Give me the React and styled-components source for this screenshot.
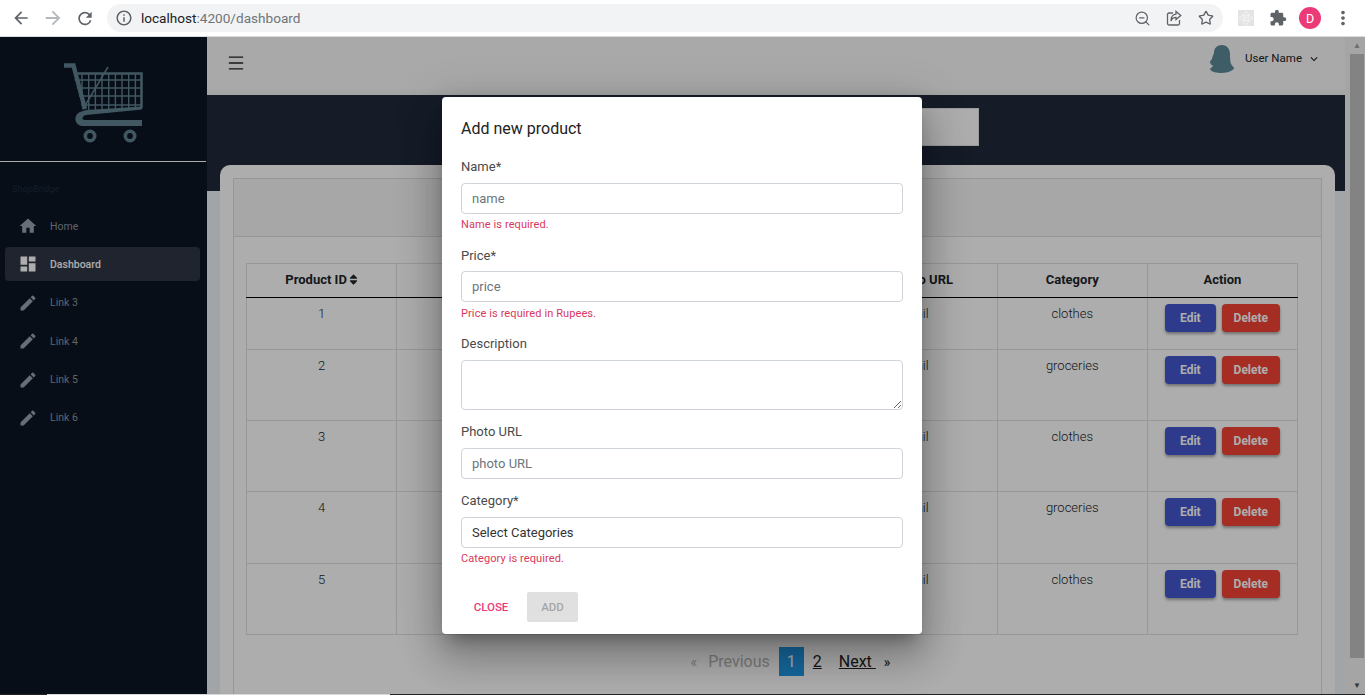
import React from "react";
import styled, { createGlobalStyle } from "styled-components";
import {
  MdArrowBack,
  MdArrowForward,
  MdRefresh,
  MdInfoOutline,
  MdExtension,
  MdMoreVert,
  MdHome,
  MdDashboard,
  MdEdit,
  MdKeyboardArrowDown,
} from "react-icons/md";
import { FaSort } from "react-icons/fa";
import { Menu, Star, ZoomOut } from "lucide-react";

const GlobalStyle = createGlobalStyle`
  html, body {
    margin: 0;
    height: 100%;
    overflow: hidden;
    font-family: Roboto, "Liberation Sans", sans-serif;
  }
  * {
    box-sizing: border-box;
  }
`;

const BrowserBar = styled.div`
  height: 37px;
  display: flex;
  align-items: center;
  padding: 0 0 0 11px;
  background: #fff;
  border-bottom: 1px solid #dadce0;
`;
const ChromeIcon = styled.span`
  width: ${(p) => p.$w || 32}px;
  display: flex;
  justify-content: center;
  color: ${(p) => p.$color || "#5f6368"};
  font-size: ${(p) => p.$size || 20}px;
`;
const UrlPill = styled.div`
  width: 1118px;
  height: 28px;
  margin: 0 7px 0 12px;
  padding: 0 1px 0 5px;
  display: flex;
  align-items: center;
  border-radius: 14px;
  background: #f1f3f4;
`;
const UrlText = styled.span`
  flex: 1;
  margin-left: 5px;
  font-size: 13.6px;
  color: #70757a;
`;
const UrlHost = styled.span`
  color: #202124;
`;
const ExtensionTile = styled.span`
  width: 16px;
  height: 16px;
  display: flex;
  margin: 0 8px;
`;
const ProfileBadge = styled.span`
  width: 22px;
  height: 22px;
  margin-left: 5px;
  border-radius: 50%;
  display: flex;
  align-items: center;
  justify-content: center;
  background: #ec3a78;
  color: #fff;
  font-size: 12.5px;
`;

const Viewport = styled.div`
  position: relative;
  height: 657px;
  display: flex;
  overflow: hidden;
  background: #eff4f8;
`;
const BottomEdge = styled.div`
  height: 1px;
  display: flex;
  background: #222;
`;
const EdgeLight = styled.span`
  width: 343px;
  margin-left: 47px;
  background: #d8d8d8;
`;

const Sidebar = styled.aside`
  width: 207px;
  flex: none;
  background: #0c1624;
`;
const LogoArea = styled.div`
  height: 125px;
  display: flex;
  justify-content: center;
  padding: 26px 0 0 1px;
  margin-right: 1px;
  border-bottom: 1px solid #ffffff;
`;
const BrandText = styled.div`
  margin: 21px 0 0 12px;
  height: 12px;
  font-size: 9.5px;
  line-height: 12px;
  font-style: italic;
  color: #1d2a3e;
`;
const NavList = styled.nav`
  margin-top: 14px;
  padding: 0 7px 0 5px;
  display: flex;
  flex-direction: column;
  gap: 4.4px;
`;
const NavItem = styled.a`
  height: 34px;
  padding-left: 13px;
  display: flex;
  align-items: center;
  gap: 12px;
  border-radius: 4px;
  font-size: 10.5px;
  font-weight: ${(p) => (p.$active ? 500 : 400)};
  color: ${(p) => (p.$active ? "#ffffff" : "#8c93a0")};
  background: ${(p) => (p.$active ? "#303645" : "transparent")};
  svg {
    flex: none;
    font-size: 20px;
    color: ${(p) => (p.$active ? "#ffffff" : "#9aa2ae")};
  }
`;

const Main = styled.main`
  flex: 1;
  min-width: 0;
  display: flex;
  flex-direction: column;
`;
const TopBar = styled.header`
  height: 58px;
  flex: none;
  padding: 0 24px 6px 19px;
  display: flex;
  align-items: center;
  justify-content: space-between;
  background: linear-gradient(#f9f9f9 88%, #f0f0f0);
  color: #222;
`;
const UserMenu = styled.div`
  display: flex;
  align-items: center;
  margin-bottom: 8px;
  font-size: 11.5px;
`;
const UserName = styled.span`
  margin: 0 5px 2px 10px;
`;
const Hero = styled.div`
  height: 96px;
  flex: none;
  padding-top: 13px;
  display: flex;
  justify-content: center;
  background: #1f2a3b;
`;
const SearchBox = styled.div`
  width: 406px;
  height: 38px;
  background: #ffffff;
  border: 1px solid #e4e4e4;
`;
const Card = styled.section`
  flex: 1;
  margin: -26px 10px 0 13px;
  padding: 13px;
  background: #ffffff;
  border-radius: 10px 10px 0 0;
`;
const InnerCard = styled.div`
  height: 600px;
  border: 1px solid #dfdfdf;
`;
const CardHeader = styled.div`
  height: 58px;
  background: #f7f7f7;
  border-bottom: 1px solid #dfdfdf;
`;
const CardBody = styled.div`
  padding: 26px 12px 0 12px;
`;
const Table = styled.table`
  width: 1052px;
  table-layout: fixed;
  border-collapse: collapse;
  font-size: 13px;
  color: #212529;
  text-align: center;
`;
const HeadCell = styled.th`
  height: 34px;
  padding: 0 0 3px;
  font-weight: 700;
  font-size: 13px;
  border: 1px solid #dee2e6;
  border-bottom: 1px solid #000;
  svg {
    margin: 0 -2.5px 0 0.5px;
    font-size: 13px;
    vertical-align: -2px;
  }
`;
const Row = styled.tr`
  height: ${(p) => p.$height}px;
`;
const Cell = styled.td`
  padding: 5px 8px 0;
  vertical-align: top;
  line-height: 21px;
  font-weight: 300;
  border: 1px solid #dee2e6;
`;
const ActionCell = styled(Cell)`
  padding: 6px 0 0;
  text-align: left;
`;
const ActionGroup = styled.div`
  display: flex;
  gap: 6px;
  padding-left: 17px;
`;
const ActionButton = styled.button`
  width: ${(p) => p.$w}px;
  height: 28px;
  padding: 0;
  border: none;
  border-radius: 4px;
  font-family: inherit;
  font-size: 12px;
  font-weight: 700;
  color: #ffffff;
  background: ${(p) => p.$bg};
  box-shadow: 0 2px 3px rgba(0, 0, 0, 0.35);
`;
const Pager = styled.div`
  height: 29px;
  margin-top: 12px;
  padding-left: 26px;
  display: flex;
  align-items: center;
  justify-content: center;
  font-size: 16px;
`;
const PagerText = styled.span`
  color: ${(p) => (p.$muted ? "#b4b4b4" : "#222")};
  font-size: ${(p) => p.$size || 16}px;
  margin: ${(p) => p.$margin || "0"};
`;
const PagerLink = styled.a`
  color: #222;
  text-decoration: underline;
  white-space: pre;
  margin: ${(p) => p.$margin || "0"};
`;
const PagerCurrent = styled.span`
  width: 25px;
  height: 29px;
  display: flex;
  align-items: center;
  justify-content: center;
  margin: 0 9px;
  color: #fff;
  background: #2199e8;
`;

const ScrollTrack = styled.div`
  width: 20px;
  flex: none;
  padding: 0 1px 0 5px;
  display: flex;
  flex-direction: column;
  align-items: center;
  background: #f4f4f4;
`;
const ScrollArrow = styled.span`
  height: 17px;
  flex: none;
  margin-top: ${(p) => (p.$bottom ? "auto" : "0")};
  display: flex;
  align-items: center;
  justify-content: center;
  font-size: 8px;
  color: ${(p) => (p.$bottom ? "#505050" : "#a0a0a0")};
`;
const ScrollThumb = styled.span`
  width: 14px;
  height: 604px;
  flex: none;
  background: #c1c1c1;
`;

const Backdrop = styled.div`
  position: absolute;
  inset: 0;
  display: flex;
  justify-content: center;
  align-items: flex-start;
  padding: 60px 1px 0 0;
  background: rgba(0, 0, 0, 0.32);
`;
const Modal = styled.div`
  width: 480px;
  height: 537px;
  padding: 20px 19px 0;
  background: #ffffff;
  border-radius: 4px;
  box-shadow: 0 11px 15px -7px rgba(0, 0, 0, 0.3),
    0 24px 38px 3px rgba(0, 0, 0, 0.2), 0 9px 46px 8px rgba(0, 0, 0, 0.14);
`;
const ModalTitle = styled.h2`
  margin: 0 0 18px;
  font-size: 16px;
  line-height: 23px;
  font-weight: 400;
  color: #222;
`;
const Field = styled.div`
  margin-bottom: ${(p) => (p.$error ? 0 : 13.7)}px;
`;
const Label = styled.label`
  display: block;
  height: 16px;
  margin-bottom: 8.5px;
  font-size: 13px;
  line-height: 17px;
  color: #4a4a4a;
`;
const controlStyles = `
  display: block;
  width: 100%;
  padding: 0 10px;
  font-family: inherit;
  font-size: 13px;
  color: #333;
  background: #fff;
  border: 1px solid #ced4da;
  border-radius: 4px;
  outline: none;
  &::placeholder {
    color: #6c757d;
    opacity: 1;
  }
`;
const TextInput = styled.input`
  ${controlStyles}
  height: 31px;
`;
const TextArea = styled.textarea`
  ${controlStyles}
  height: 50px;
`;
const Select = styled.select`
  ${controlStyles}
  height: 31px;
  appearance: none;
`;
const ErrorText = styled.div`
  height: 12px;
  margin: 5.5px 0 15.5px;
  font-size: 11px;
  letter-spacing: 0.1px;
  line-height: 12px;
  color: #d9385c;
`;
const ModalActions = styled.div`
  display: flex;
  align-items: center;
  gap: 6px;
  margin-top: 26.5px;
`;
const DialogButton = styled.button`
  height: 30px;
  width: ${(p) => p.$w}px;
  padding: 0;
  border: none;
  border-radius: 2px;
  font-family: inherit;
  font-size: 11.5px;
  font-weight: 500;
  color: ${(p) => p.$color};
  background: ${(p) => p.$bg || "transparent"};
`;

const ShareIcon = () => (
  <svg width="16" height="16" viewBox="0 0 16 16" fill="none" stroke="#5f6368" strokeWidth="1.3">
    <path d="M7 3H3a1.5 1.5 0 0 0-1.5 1.5v9A1.5 1.5 0 0 0 3 15h9a1.5 1.5 0 0 0 1.5-1.5V10" />
    <path d="M10 1.5 14.8 5.6 10 9.6V7.4C7.5 7.4 6 8.6 5 11c0-4 2-6.5 5-6.8z" />
  </svg>
);

const AtomTile = () => (
  <svg width="16" height="16" viewBox="0 0 16 16" fill="none" stroke="#f4f4f4" strokeWidth="0.9">
    <rect width="16" height="16" fill="#e4e4e4" stroke="none" />
    <ellipse cx="8" cy="8" rx="6.5" ry="2.8" />
    <ellipse cx="8" cy="8" rx="2.8" ry="6.5" />
    <circle cx="8" cy="8" r="1.4" />
  </svg>
);

const logoColor = "#60808f";

const CartLogo = () => (
  <svg width="80" height="82" viewBox="0 0 80 82" fill="none">
    <g stroke={logoColor} strokeWidth="1.4">
      {[18, 24.7, 31.4, 38, 44.7, 51.4, 58, 64.7, 71.4].map((x) => (
        <line key={x} x1={x} y1="10" x2={x} y2="50" />
      ))}
      {[17, 25, 33, 42].map((y) => (
        <line key={y} x1="10" y1={y} x2="78" y2={y} />
      ))}
      <line x1="19" y1="46" x2="44" y2="4" strokeWidth="1.5" />
    </g>
    {/* masks the mesh outside the basket */}
    <path d="M9 11 20 52H8z" fill="#0c1624" />
    <path d="M24 52 78 46V54H24z" fill="#0c1624" />
    <path d="M0 2.5H9.5L21 46" stroke={logoColor} strokeWidth="4.4" />
    <path d="M11 10.5H77.5V45" stroke={logoColor} strokeWidth="2.6" />
    <path
      d="M78 43.5V46.5L22 52C18 53 17 57 21 57H78V63H19C10 63 9 52 16 49L22 47z"
      fill={logoColor}
    />
    <circle cx="26" cy="73" r="4.7" stroke={logoColor} strokeWidth="3.6" />
    <circle cx="66" cy="73" r="4.7" stroke={logoColor} strokeWidth="3.6" />
  </svg>
);

const UserSilhouette = () => (
  <svg width="26" height="28" viewBox="0 0 26 28">
    <path
      d="M13 0c5 0 8 4 8 9 0 4 0 7 1 10 1 2 3 3 3 4 0 2-6 5-12 5-5 0-11-1-12-4 0-1 3-2 3-3-1-1-3-2-3-4s2-2 2-3c0-2 1-3 2-6 0-5 3-8 8-8z"
      fill="#5d8a97"
    />
  </svg>
);

const navItems = [
  { label: "Home", icon: <MdHome /> },
  { label: "Dashboard", icon: <MdDashboard />, active: true },
  { label: "Link 3", icon: <MdEdit /> },
  { label: "Link 4", icon: <MdEdit /> },
  { label: "Link 5", icon: <MdEdit /> },
  { label: "Link 6", icon: <MdEdit /> },
];

const products = [
  { id: 1, category: "clothes", height: 52 },
  { id: 2, category: "groceries", height: 71 },
  { id: 3, category: "clothes", height: 71 },
  { id: 4, category: "groceries", height: 72 },
  { id: 5, category: "clothes", height: 71 },
];

const App = () => {
  return (
    <>
      <GlobalStyle />
      <BrowserBar>
        <ChromeIcon $size={22} $w={20}>
          <MdArrowBack />
        </ChromeIcon>
        <ChromeIcon $size={22} $w={44} $color="#b4b7bb">
          <MdArrowForward />
        </ChromeIcon>
        <ChromeIcon $size={23} $w={20}>
          <MdRefresh />
        </ChromeIcon>
        <UrlPill>
          <ChromeIcon $size={18} $w={24}>
            <MdInfoOutline />
          </ChromeIcon>
          <UrlText>
            <UrlHost>localhost</UrlHost>:4200/dashboard
          </UrlText>
          <ChromeIcon>
            <ZoomOut size={17} strokeWidth={1.7} />
          </ChromeIcon>
          <ChromeIcon>
            <ShareIcon />
          </ChromeIcon>
          <ChromeIcon>
            <Star size={16} strokeWidth={2} />
          </ChromeIcon>
        </UrlPill>
        <ExtensionTile>
          <AtomTile />
        </ExtensionTile>
        <ChromeIcon $size={18}>
          <MdExtension />
        </ChromeIcon>
        <ProfileBadge>D</ProfileBadge>
        <ChromeIcon $size={22} $w={44}>
          <MdMoreVert />
        </ChromeIcon>
      </BrowserBar>
      <Viewport>
        <Sidebar>
          <LogoArea>
            <CartLogo />
          </LogoArea>
          <BrandText>ShopBridge</BrandText>
          <NavList>
            {navItems.map((item) => (
              <NavItem key={item.label} $active={item.active}>
                {item.icon}
                {item.label}
              </NavItem>
            ))}
          </NavList>
        </Sidebar>
        <Main>
          <TopBar>
            <Menu size={20} strokeWidth={1.6} />
            <UserMenu>
              <UserSilhouette />
              <UserName>User Name</UserName>
              <MdKeyboardArrowDown size={14} />
            </UserMenu>
          </TopBar>
          <Hero>
            <SearchBox />
          </Hero>
          <Card>
            <InnerCard>
              <CardHeader />
              <CardBody>
                <Table>
                  <thead>
                    <tr>
                      <HeadCell>
                        Product ID
                        <FaSort />
                      </HeadCell>
                      <HeadCell>Name</HeadCell>
                      <HeadCell>Price</HeadCell>
                      <HeadCell>Description</HeadCell>
                      <HeadCell>Photo URL</HeadCell>
                      <HeadCell>Category</HeadCell>
                      <HeadCell>Action</HeadCell>
                    </tr>
                  </thead>
                  <tbody>
                    {products.map((p) => (
                      <Row key={p.id} $height={p.height}>
                        <Cell>{p.id}</Cell>
                        <Cell />
                        <Cell />
                        <Cell />
                        <Cell>nil</Cell>
                        <Cell>{p.category}</Cell>
                        <ActionCell>
                          <ActionGroup>
                            <ActionButton $w={51} $bg="#4558d0">
                              Edit
                            </ActionButton>
                            <ActionButton $w={58} $bg="#f44336">
                              Delete
                            </ActionButton>
                          </ActionGroup>
                        </ActionCell>
                      </Row>
                    ))}
                  </tbody>
                </Table>
                <Pager>
                  <PagerText $muted $size={14} $margin="0 11px 0 0">
                    «
                  </PagerText>
                  <PagerText $muted>Previous</PagerText>
                  <PagerCurrent>1</PagerCurrent>
                  <PagerLink>2</PagerLink>
                  <PagerLink $margin="0 8px 0 17px">Next </PagerLink>
                  <PagerText $size={14}>»</PagerText>
                </Pager>
              </CardBody>
            </InnerCard>
          </Card>
        </Main>
        <ScrollTrack>
          <ScrollArrow>▲</ScrollArrow>
          <ScrollThumb />
          <ScrollArrow $bottom>▼</ScrollArrow>
        </ScrollTrack>
        <Backdrop>
          <Modal>
            <ModalTitle>Add new product</ModalTitle>
            <Field $error>
              <Label>Name*</Label>
              <TextInput placeholder="name" />
              <ErrorText>Name is required.</ErrorText>
            </Field>
            <Field $error>
              <Label>Price*</Label>
              <TextInput placeholder="price" />
              <ErrorText>Price is required in Rupees.</ErrorText>
            </Field>
            <Field>
              <Label>Description</Label>
              <TextArea />
            </Field>
            <Field>
              <Label>Photo URL</Label>
              <TextInput placeholder="photo URL" />
            </Field>
            <Field $error>
              <Label>Category*</Label>
              <Select defaultValue="">
                <option value="">Select Categories</option>
                <option value="clothes">clothes</option>
                <option value="groceries">groceries</option>
              </Select>
              <ErrorText>Category is required.</ErrorText>
            </Field>
            <ModalActions>
              <DialogButton $w={60} $color="#ec3a78">
                CLOSE
              </DialogButton>
              <DialogButton $w={51} $color="#a6a6a6" $bg="#e0e0e0" disabled>
                ADD
              </DialogButton>
            </ModalActions>
          </Modal>
        </Backdrop>
      </Viewport>
      <BottomEdge>
        <EdgeLight />
      </BottomEdge>
    </>
  );
};

export default App;
